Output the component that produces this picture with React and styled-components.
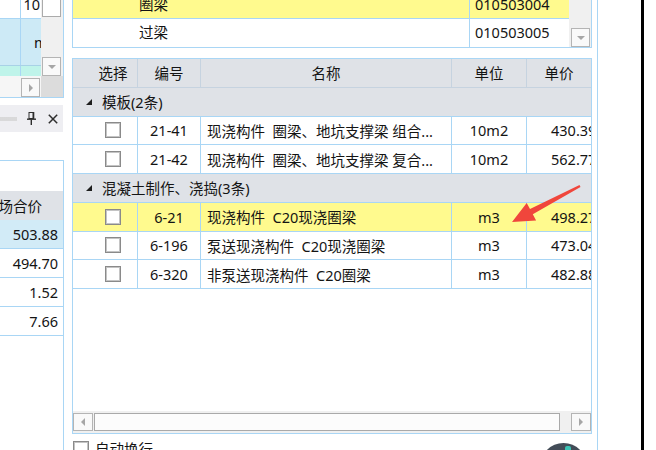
import React from 'react';
import styled, { createGlobalStyle } from 'styled-components';

const GRID = '#a9d6f5';
const HEAD_BG = '#dfe2e7';
const HEAD_LINE = '#c6d3e0';
const YELLOW = '#fffa8e';

const GlobalStyle = createGlobalStyle`
  html, body { margin: 0; padding: 0; background: #fff; }
  body {
    font-family: "Noto Sans", "Noto Sans CJK SC", sans-serif;
    font-size: 14.5px;
    color: #141414;
  }
  * { box-sizing: border-box; }
`;

const Page = styled.div`
  position: relative;
  display: flex;
  width: 656px;
  height: 450px;
  overflow: hidden;
  background: #fff;
`;

/* small scroll arrows */
const tri = {
  down: 'border-left:4px solid transparent;border-right:4px solid transparent;border-top:4px solid #a6a6a6;',
  right: 'border-top:4px solid transparent;border-bottom:4px solid transparent;border-left:4px solid #a6a6a6;',
  left: 'border-top:4px solid transparent;border-bottom:4px solid transparent;border-right:4px solid #a6a6a6;',
};

const ScrollBtn = styled.div`
  flex: none;
  width: ${(p) => p.$w || 19}px;
  height: ${(p) => p.$h || 19}px;
  border: 1px solid #b4b4b4;
  background: #f9f9f9;
  display: flex;
  align-items: center;
  justify-content: center;
  &::after {
    content: '';
    width: 0;
    height: 0;
    ${(p) => tri[p.$dir]}
  }
`;

/* ---------- left dock ---------- */

const LeftDock = styled.div`
  flex: none;
  width: 64px;
  display: flex;
  flex-direction: column;
`;

const MiniGrid = styled.div`
  flex: none;
  height: 98px;
  border-right: 1px solid ${GRID};
  border-bottom: 1px solid ${GRID};
  display: grid;
  grid-template-columns: 41px 22px;
  grid-template-rows: 76px 21px;
`;

const MiniRows = styled.div`
  display: flex;
  flex-direction: column;
  overflow: hidden;
`;

const MiniRow = styled.div`
  flex: ${(p) => (p.$h ? `0 0 ${p.$h}px` : '1')};
  display: grid;
  grid-template-columns: 14px 1fr;
  background: ${(p) => p.$bg || '#fff'};
  border-bottom: ${(p) => (p.$line ? `1px solid ${p.$line}` : 'none')};
  line-height: ${(p) => p.$lh || 'normal'};
  & > :first-child { border-right: 1px solid ${GRID}; }
`;

const MiniCell = styled.div`
  display: flex;
  align-items: ${(p) => (p.$top ? 'flex-start' : 'center')};
  justify-content: ${(p) => (p.$right ? 'flex-end' : 'flex-start')};
  padding: ${(p) => (p.$right ? '0 1px 0 0' : '0 0 0 20px')};
  white-space: nowrap;
  overflow: hidden;
`;

const MiniVScroll = styled.div`
  background: #f0f0f0;
  display: flex;
  flex-direction: column;
  justify-content: space-between;
  padding: 0 2px 0 1px;
`;

const MiniThumb = styled.div`
  height: 17px;
  border: 1px solid #ababab;
  border-top: none;
  background: #fff;
`;

const MiniHTrack = styled.div`
  background: #f6f6f6;
  display: flex;
  justify-content: flex-end;
  padding: 2px 1px 0 0;
`;

const Corner = styled.div`
  background: #dcdcdc;
`;

const DockHeader = styled.div`
  flex: none;
  margin-top: 7px;
  height: 27px;
  width: 63px;
  background: #eeeef2;
  display: flex;
  align-items: center;
`;

const Grip = styled.div`
  width: 17px;
  height: 4px;
  background-image: radial-gradient(circle at 1px 1px, #cdcdcd 0.6px, transparent 0.9px);
  background-size: 2px 2px;
`;

const DockIcon = styled.svg`
  flex: none;
  margin-left: ${(p) => p.$ml}px;
  display: block;
`;

const LowerBox = styled.div`
  margin-top: 28px;
  flex: 1;
  border-top: 1px solid ${GRID};
  border-right: 1px solid ${GRID};
  display: flex;
  flex-direction: column;
`;

const LowerBlank = styled.div`
  flex: none;
  height: 30px;
`;

const LowerHead = styled.div`
  flex: none;
  height: 29px;
  background: ${HEAD_BG};
  display: flex;
  align-items: center;
  justify-content: flex-end;
  padding-right: 21px;
  white-space: nowrap;
  overflow: hidden;
`;

const LowerRow = styled.div`
  flex: none;
  height: 29px;
  background: ${(p) => p.$bg || '#fff'};
  border-bottom: 1px solid ${GRID};
  display: flex;
  align-items: center;
  justify-content: flex-end;
  padding-right: 5px;
`;

/* ---------- main panel ---------- */

const Main = styled.div`
  flex: none;
  width: 526px;
  margin-left: 8px;
  padding-right: 5px;
  border-right: 1px solid ${GRID};
  display: flex;
  flex-direction: column;
`;

const Gutter = styled.div`
  flex: none;
  width: 43px;
`;

const BlackRule = styled.div`
  flex: none;
  width: 3px;
  background: #000;
`;

const TopList = styled.div`
  flex: none;
  height: 48px;
  display: flex;
  border-left: 1px solid ${GRID};
  border-right: 1px solid ${GRID};
  border-bottom: 1px solid ${GRID};
`;

const TopRows = styled.div`
  flex: 1;
  display: flex;
  flex-direction: column;
`;

const TopRow = styled.div`
  flex: ${(p) => (p.$h ? `0 0 ${p.$h}px` : '1')};
  display: grid;
  grid-template-columns: 397px 1fr;
  background: ${(p) => (p.$active ? YELLOW : '#fff')};
  border-bottom: ${(p) => (p.$line ? `1px solid ${GRID}` : 'none')};
  line-height: ${(p) => (p.$lh ? `${p.$lh}px` : '27px')};
  white-space: nowrap;
`;

const TopName = styled.div`
  border-right: 1px solid ${GRID};
  padding-left: 66px;
`;

const TopCode = styled.div`
  padding-left: 5px;
`;

const TopScroll = styled.div`
  flex: none;
  width: 22px;
  background: #f0f0f0;
  display: flex;
  flex-direction: column;
  justify-content: flex-end;
  padding: 0 1px 0 2px;
`;

const Table = styled.div`
  flex: none;
  margin-top: 10px;
  height: 376px;
  border: 1px solid ${GRID};
  display: flex;
  flex-direction: column;
`;

const COLS = '65px 63px 251px 75px 1fr';

const HeadRow = styled.div`
  flex: 0 0 28.75px;
  display: grid;
  grid-template-columns: ${COLS};
  background: ${HEAD_BG};
  border-bottom: 1px solid ${HEAD_LINE};
`;

const HeadCell = styled.div`
  display: flex;
  align-items: center;
  justify-content: center;
  padding-left: ${(p) => (p.$first ? 16 : 0)}px;
  border-right: ${(p) => (p.$last ? 'none' : `1px solid ${HEAD_LINE}`)};
  white-space: nowrap;
  overflow: hidden;
`;

const GroupRow = styled.div`
  flex: 0 0 28.75px;
  display: flex;
  align-items: center;
  gap: 10px;
  padding-left: 13px;
  background: ${HEAD_BG};
  border-bottom: 1px solid ${GRID};
  white-space: nowrap;
`;

const Expander = styled.span`
  width: 0;
  height: 0;
  margin-top: 1px;
  border-left: 6px solid transparent;
  border-bottom: 6px solid #1e1e1e;
`;

const DataRow = styled.div`
  flex: 0 0 28.75px;
  display: grid;
  grid-template-columns: ${COLS};
  background: ${(p) => (p.$active ? YELLOW : '#fff')};
  border-bottom: 1px solid ${GRID};
`;

const DataCell = styled.div`
  display: flex;
  align-items: center;
  justify-content: ${(p) => (p.$align === 'center' ? 'center' : 'flex-start')};
  padding-left: ${(p) => p.$pl || 0}px;
  border-right: ${(p) => (p.$last ? 'none' : `1px solid ${GRID}`)};
  white-space: pre;
  overflow: hidden;
`;

const Check = styled.span`
  flex: none;
  width: 16px;
  height: 16px;
  border: 1px solid #8a8a8a;
  box-shadow: inset 0 0 0 1px #c4c4c4;
  background: #fff;
`;

const Filler = styled.div`
  flex: 1;
`;

const HBar = styled.div`
  flex: 0 0 22px;
  background: #f0f0f0;
  display: flex;
  padding-top: 2px;
`;

const HThumb = styled.div`
  flex: none;
  width: 466px;
  height: 18px;
  margin: 0 11px 0 1px;
  border: 1px solid #a9a9a9;
  background: #fcfcfc;
`;

const Footer = styled.div`
  flex: none;
  margin-top: 7px;
  display: flex;
  align-items: flex-start;
  gap: 6px;
  padding-left: 1px;
  white-space: nowrap;
`;

const FooterText = styled.span`
  line-height: 17px;
`;

/* ---------- overlays ---------- */

const ArrowLayer = styled.svg`
  position: absolute;
  left: 0;
  top: 0;
  pointer-events: none;
`;

const FloatBall = styled.div`
  position: absolute;
  left: 540px;
  top: 443px;
  width: 47px;
  height: 47px;
  border-radius: 50%;
  background: #434d58;
  display: flex;
  justify-content: center;
  padding-top: 3px;
  &::after {
    content: '';
    width: 6px;
    height: 8px;
    margin-left: 9px;
    border-radius: 2px 2px 0 0;
    background: #3cc4b6;
  }
`;

const groups = [
  {
    title: '模板(2条)',
    items: [
      { code: '21-41', name: '现浇构件  圈梁、地坑支撑梁 组合...', unit: '10m2', price: '430.39' },
      { code: '21-42', name: '现浇构件  圈梁、地坑支撑梁 复合...', unit: '10m2', price: '562.77' },
    ],
  },
  {
    title: '混凝土制作、浇捣(3条)',
    items: [
      { code: '6-21', name: '现浇构件  C20现浇圈梁', unit: 'm3', price: '498.27', active: true },
      { code: '6-196', name: '泵送现浇构件  C20现浇圈梁', unit: 'm3', price: '473.04' },
      { code: '6-320', name: '非泵送现浇构件  C20圈梁', unit: 'm3', price: '482.88' },
    ],
  },
];

const lowerValues = ['503.88', '494.70', '1.52', '7.66'];

export default function App() {
  return (
    <Page>
      <GlobalStyle />

      <LeftDock>
        <MiniGrid>
          <MiniRows>
            <MiniRow $h={19} $line={GRID} $lh="9px">
              <MiniCell />
              <MiniCell $right $top>10</MiniCell>
            </MiniRow>
            <MiniRow $h={47} $bg="#cdeaf6" $line="#a8d2e6">
              <MiniCell />
              <MiniCell>m3</MiniCell>
            </MiniRow>
            <MiniRow $bg="#bff4ea">
              <MiniCell />
              <MiniCell />
            </MiniRow>
          </MiniRows>
          <MiniVScroll>
            <MiniThumb />
            <ScrollBtn $dir="down" />
          </MiniVScroll>
          <MiniHTrack>
            <ScrollBtn $dir="right" />
          </MiniHTrack>
          <Corner />
        </MiniGrid>

        <DockHeader>
          <Grip />
          <DockIcon $ml={10} width="9" height="13" viewBox="0 0 9 13">
            <rect x="2" y="0.5" width="4.5" height="6" fill="none" stroke="#2e2e2e" />
            <rect x="5.5" y="0" width="1.8" height="7" fill="#2e2e2e" />
            <rect x="0" y="6.5" width="9" height="1.4" fill="#2e2e2e" />
            <rect x="3.6" y="7.5" width="1.4" height="5.5" fill="#2e2e2e" />
          </DockIcon>
          <DockIcon $ml={12} width="10" height="10" viewBox="0 0 10 10">
            <path d="M0.8 0.8 L9.2 9.2 M9.2 0.8 L0.8 9.2" stroke="#2e2e2e" strokeWidth="1.5" />
          </DockIcon>
        </DockHeader>

        <LowerBox>
          <LowerBlank />
          <LowerHead>现场合价</LowerHead>
          {lowerValues.map((v, i) => (
            <LowerRow key={v} $bg={i === 0 ? '#d2ebf7' : '#fff'}>
              {v}
            </LowerRow>
          ))}
        </LowerBox>
      </LeftDock>

      <Main>
        <TopList>
          <TopRows>
            <TopRow $h={19} $line $active $lh={9}>
              <TopName>圈梁</TopName>
              <TopCode>010503004</TopCode>
            </TopRow>
            <TopRow>
              <TopName>过梁</TopName>
              <TopCode>010503005</TopCode>
            </TopRow>
          </TopRows>
          <TopScroll>
            <ScrollBtn $dir="down" />
          </TopScroll>
        </TopList>

        <Table>
          <HeadRow>
            <HeadCell $first>选择</HeadCell>
            <HeadCell>编号</HeadCell>
            <HeadCell>名称</HeadCell>
            <HeadCell>单位</HeadCell>
            <HeadCell $last>单价</HeadCell>
          </HeadRow>

          {groups.map((g) => (
            <React.Fragment key={g.title}>
              <GroupRow>
                <Expander />
                <span>{g.title}</span>
              </GroupRow>
              {g.items.map((it) => (
                <DataRow key={it.code} $active={it.active}>
                  <DataCell $align="center" $pl={16}>
                    <Check />
                  </DataCell>
                  <DataCell $align="center">{it.code}</DataCell>
                  <DataCell $pl={6}>{it.name}</DataCell>
                  <DataCell $align="center">{it.unit}</DataCell>
                  <DataCell $pl={24} $last>{it.price}</DataCell>
                </DataRow>
              ))}
            </React.Fragment>
          ))}

          <Filler />

          <HBar>
            <ScrollBtn $dir="left" $w={20} $h={18} />
            <HThumb />
            <ScrollBtn $dir="right" $w={20} $h={18} />
          </HBar>
        </Table>

        <Footer>
          <Check />
          <FooterText>自动换行</FooterText>
        </Footer>
      </Main>

      <Gutter />
      <BlackRule />

      <ArrowLayer width="656" height="450" viewBox="0 0 656 450">
        <polygon
          points="512,222 526.7,202.9 530,209 579.5,185.1 580.5,186.9 532.8,214.3 536.1,220.5"
          fill="#f0463c"
        />
      </ArrowLayer>
      <FloatBall />
    </Page>
  );
}
